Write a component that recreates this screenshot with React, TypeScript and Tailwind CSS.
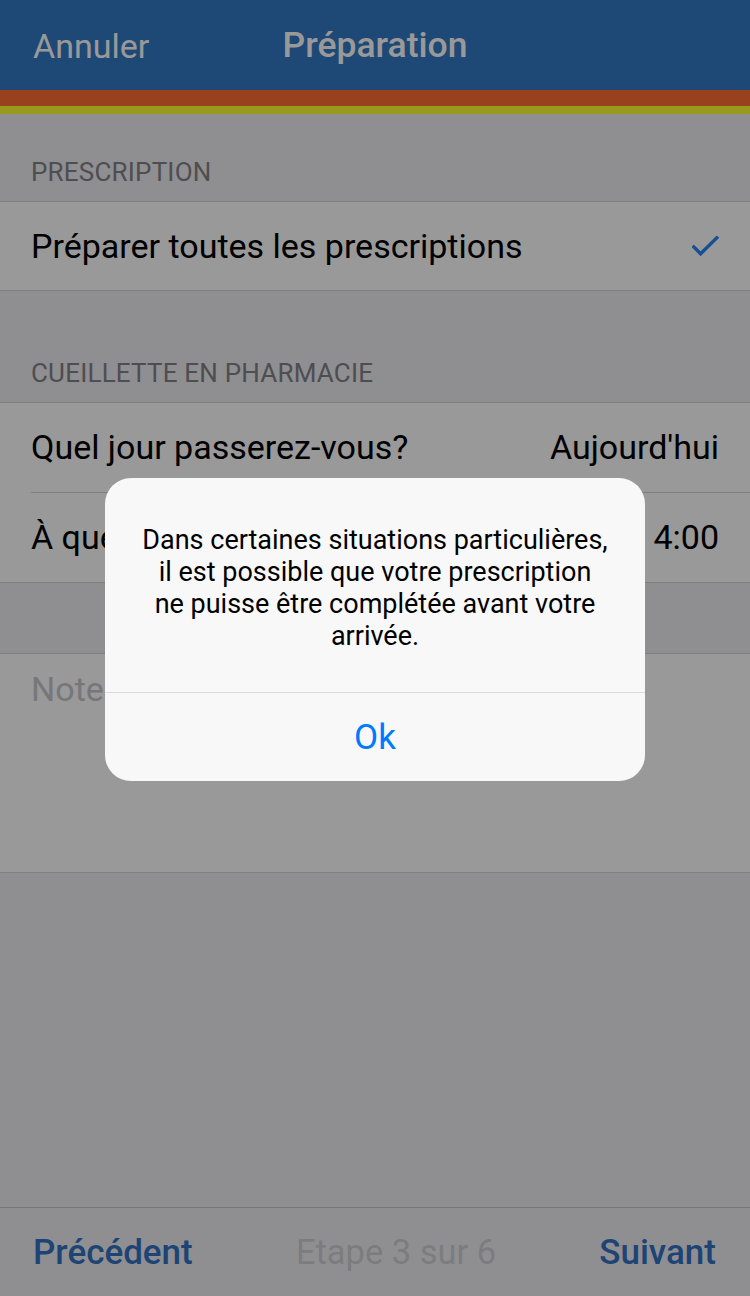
import React from "react";

const F = { fontFamily: "Roboto, 'Noto Sans', sans-serif" };

function Check() {
  return (
    <svg width="27" height="21" viewBox="0 0 27 21" fill="none">
      <path d="M1.8 11 L8.6 17.8 L24.8 1.8" stroke="#2685f5" strokeWidth="3.4" strokeLinecap="square" />
    </svg>
  );
}

export default function App() {
  return (
    <div className="relative w-[750px] h-[1296px] overflow-hidden bg-[#eeeef2] flex flex-col" style={F}>
      {/* Header */}
      <div className="h-[90px] bg-[#3278c3] relative flex items-center">
        <span className="pl-[33px] text-[34px] text-white leading-none pt-[2px]">Annuler</span>
        <span className="absolute left-0 right-0 top-0 h-[90px] flex items-center justify-center pt-[2px] text-[35.5px] font-medium text-white leading-none pointer-events-none">
          Préparation
        </span>
      </div>
      <div className="h-[16px] bg-[#ff6c35]" />
      <div className="h-[8px] bg-[#ffff33]" />

      {/* Section 1 */}
      <div className="h-[87px] flex items-end pb-[16px] pl-[31px] text-[26px] text-[#828287] leading-none tracking-[0.2px]">
        PRESCRIPTION
      </div>
      <div className="bg-white border-y border-[#d4d4d6] h-[90px] flex items-center justify-between pl-[31px] pr-[31px]">
        <span className="text-[34px] text-black">Préparer toutes les prescriptions</span>
        <Check />
      </div>

      {/* Section 2 */}
      <div className="h-[111px] flex items-end pb-[16px] pl-[31px] text-[26px] text-[#828287] leading-none tracking-[0.2px]">
        CUEILLETTE EN PHARMACIE
      </div>
      <div className="bg-white border-y border-[#d4d4d6]">
        <div className="h-[89px] flex items-center justify-between pl-[31px] pr-[31px]">
          <span className="text-[34px] text-black">Quel jour passerez-vous?</span>
          <span className="text-[34px] text-black">Aujourd'hui</span>
        </div>
        <div className="ml-[31px] h-px bg-[#d4d4d6]" />
        <div className="h-[89px] flex items-center justify-between pl-[31px] pr-[31px]">
          <span className="text-[34px] text-black">À quelle heure?</span>
          <span className="text-[34px] text-black">
            <span className="mr-[5px]">1</span>4:00
          </span>
        </div>
      </div>

      {/* Notes */}
      <div className="h-[70px]" />
      <div className="bg-white border-y border-[#d4d4d6] h-[220px] pl-[31px] pt-[18px]">
        <span className="block text-[34px] leading-none text-[#c7c7cd]">Notes</span>
      </div>

      <div className="flex-1" />

      {/* Footer */}
      <div className="h-[89px] border-t border-[#c9c9cc] bg-[#efeff4] flex items-center justify-between pl-[33px] pr-[34px] pt-[2px]">
        <span className="text-[35px] font-medium text-[#3272c3]">Précédent</span>
        <span className="text-[34.5px] text-[#cfcfd3]">Etape 3 sur 6</span>
        <span className="text-[35px] font-medium text-[#3272c3]">Suivant</span>
      </div>

      {/* Dim overlay */}
      <div className="absolute inset-0 bg-black/40" />

      {/* Alert */}
      <div className="absolute left-[105px] top-[478px] w-[540px] rounded-[26px] bg-[#f8f8f8] overflow-hidden">
        <div className="pt-[46px] pb-[40px] px-[20px] text-center text-[27px] leading-[32px] text-black">
          Dans certaines situations particulières,
          <br />
          il est possible que votre prescription
          <br />
          ne puisse être complétée avant votre
          <br />
          arrivée.
        </div>
        <div className="h-px bg-[#dbdbdf]" />
        <div className="h-[88px] flex items-center justify-center pt-[2px] text-[35px] text-[#007aff]">Ok</div>
      </div>
    </div>
  );
}
